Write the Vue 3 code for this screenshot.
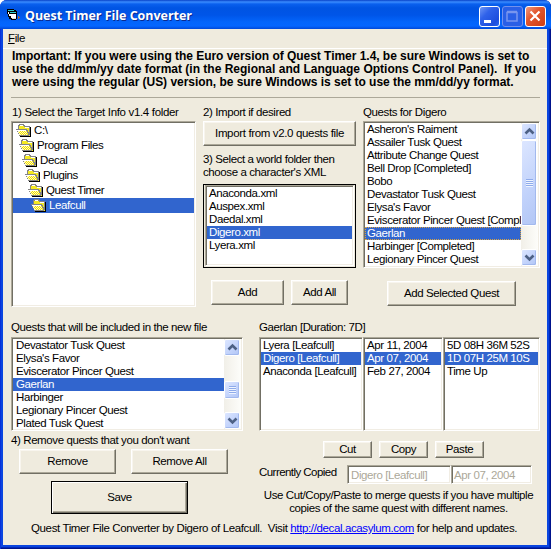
<script setup>
const folders = ['C:\\', 'Program Files', 'Decal', 'Plugins', 'Quest Timer', 'Leafcull']
const characters = ['Anaconda.xml', 'Auspex.xml', 'Daedal.xml', 'Digero.xml', 'Lyera.xml']
const quests = [
  "Asheron's Raiment", 'Assailer Tusk Quest', 'Attribute Change Quest', 'Bell Drop [Completed]',
  'Bobo', 'Devastator Tusk Quest', "Elysa's Favor", 'Eviscerator Pincer Quest [Completed]',
  'Gaerlan', 'Harbinger [Completed]', 'Legionary Pincer Quest',
]
const included = [
  'Devastator Tusk Quest', "Elysa's Favor", 'Eviscerator Pincer Quest', 'Gaerlan',
  'Harbinger', 'Legionary Pincer Quest', 'Plated Tusk Quest',
]
const timers = [
  ['Lyera [Leafcull]', 'Digero [Leafcull]', 'Anaconda [Leafcull]'],
  ['Apr 11, 2004', 'Apr 07, 2004', 'Feb 27, 2004'],
  ['5D 08H 36M 52S', '1D 07H 25M 10S', 'Time Up'],
]
</script>

<template>
  <div class="window">
    <header class="titlebar">
      <svg class="app-icon" width="14" height="14" viewBox="0 0 14 14" shape-rendering="crispEdges">
        <path d="M0 1h7v1h2v1h1v8h-1v1H4v-1H2V9H1V6H0z" fill="#000" />
        <path d="M1 2h6v1H1zM3 4h6v1H3z" fill="#2fd0d0" />
        <path d="M1 4h1v2H1zM2 6h1v2H2zM3 6h6v4H4V8H3z" fill="#fff" />
        <path d="M5 10h4v1H5z" fill="#ddd" />
        <path d="M11 8h1v1h1v1h-1v1h-1z" fill="#a8683c" />
      </svg>
      <h1>Quest Timer File Converter</h1>
      <div class="captions">
        <span class="cap"><svg width="21" height="21"><path d="M5 14h7v3H5z" fill="#fff" /></svg></span>
        <span class="cap off"><svg width="21" height="21"><path d="M5 6.5h10v8.500H5zM5 5.500h10" fill="none" stroke="#7895ee" stroke-width="1.500" /></svg></span>
        <span class="cap close"><svg width="21" height="21"><path d="M5.500 5.500l9 9M14.500 5.500l-9 9" stroke="#fff" stroke-width="2.200" /></svg></span>
      </div>
    </header>
    <nav class="menu"><span><u>F</u>ile</span></nav>
    <main>
      <div class="notice">
        <p class="n1">Important: If you were using the Euro version of Quest Timer 1.4, be sure Windows is set to</p>
        <p>use the dd/mm/yy date format (in the Regional and Language Options Control Panel).&nbsp; If you</p>
        <p class="n3">were using the regular (US) version, be sure Windows is set to use the mm/dd/yy format.</p>
      </div>

      <div class="upper">
        <section>
          <label class="step1">1) Select the Target Info v1.4 folder</label>
          <ul class="list tree">
            <li v-for="(f, i) in folders" :key="f" :class="['level-' + i, { sel: i === 5 }]">
              <svg width="16" height="13" viewBox="0 0 16 13" shape-rendering="crispEdges">
                <path d="M4 3h11v10H4z" fill="#000" />
                <path d="M3 1h1V0h4v1h1v1h5v10H3z" fill="#f5ea20" />
                <path d="M2.500 6V1.500h1v-1h4v1h1v1h5V11M0 5.500h10.500v1h1v2h1v3H3v-2H2v-2H1V6" fill="none" stroke="#858585" />
                <path d="M1 6h9v2h1v3H3V9H2V7H1z" fill="#fffbc0" />
                <path d="M1 6h9v1H1zM4 1h3v1H4zM9 3h4v1H9z" fill="#fff" />
                <path d="M3 8h1v1H3zM5 8h1v1H5zM7 8h1v1H7zM9 8h1v1H9zM4 9h1v1H4zM6 9h1v1H6zM8 9h1v1H8zM10 9h1v1h-1zM5 10h1v1H5zM7 10h1v1H7zM9 10h1v1H9zM4 7h1v1H4zM6 7h1v1H6zM8 7h1v1H8z" fill="#f2df00" />
              </svg>
              <span>{{ f }}</span>
            </li>
          </ul>
        </section>

        <section>
          <label>2) Import if desired</label>
          <button class="import">Import from v2.0 quests file</button>
          <label class="two">3) Select a world folder then<br />choose a character's XML</label>
          <div class="focus-frame">
            <ul class="list chars">
              <li v-for="(c, i) in characters" :key="c" :class="{ sel: i === 3 }">{{ c }}</li>
            </ul>
          </div>
          <div class="add-row">
            <button class="add">Add</button>
            <button class="add-all">Add All</button>
          </div>
        </section>

        <section>
          <label>Quests for Digero</label>
          <div class="list scroll quests">
            <ul>
              <li v-for="(q, i) in quests" :key="q" :class="{ sel: i === 8, dotted: i === 8 }">{{ q }}</li>
            </ul>
            <div class="bar">
              <span class="sb"><svg width="17" height="17"><path d="M4.500 10.500l4-4 4 4" /></svg></span>
              <span class="sb thumb tall"><i></i></span>
              <span class="sb end"><svg width="17" height="17"><path d="M4.500 6.500l4 4 4-4" /></svg></span>
            </div>
          </div>
          <button class="add-sel">Add Selected Quest</button>
        </section>
      </div>

      <div class="lower">
        <section>
          <label>Quests that will be included in the new file</label>
          <div class="list scroll included">
            <ul>
              <li v-for="(q, i) in included" :key="q" :class="{ sel: i === 3 }">{{ q }}</li>
            </ul>
            <div class="bar">
              <span class="sb"><svg width="17" height="17"><path d="M4.500 10.500l4-4 4 4" /></svg></span>
              <span class="sb thumb short"><i></i></span>
              <span class="sb end"><svg width="17" height="17"><path d="M4.500 6.500l4 4 4-4" /></svg></span>
            </div>
          </div>
          <label class="step4">4) Remove quests that you don't want</label>
          <div class="remove-row">
            <button>Remove</button>
            <button>Remove All</button>
          </div>
          <button class="save"><span>Save</span></button>
        </section>

        <section>
          <label>Gaerlan [Duration: 7D]</label>
          <div class="timers">
            <ul v-for="(col, c) in timers" :key="c" class="list">
              <li v-for="(t, i) in col" :key="t" :class="{ sel: i === 1 }">{{ t }}</li>
            </ul>
          </div>
          <div class="edit-row">
            <button>Cut</button>
            <button>Copy</button>
            <button>Paste</button>
          </div>
          <div class="copied">
            <label>Currently Copied</label>
            <span class="field wide">Digero [Leafcull]</span>
            <span class="field">Apr 07, 2004</span>
          </div>
          <p class="hint"><span>Use Cut/Copy/Paste to merge quests if you have multiple</span><br /><span>copies of the same quest with different names.</span></p>
        </section>
      </div>
      <footer>Quest Timer File Converter by Digero of Leafcull.&nbsp; Visit <a>http://decal.acasylum.com</a> for help and updates.</footer>
    </main>
  </div>
</template>

<style>
body { background: #fff; }
</style>

<style scoped>
* { box-sizing: border-box; margin: 0; padding: 0; }
.window {
  width: 551px; height: 549px; overflow: hidden;
  display: flex; flex-direction: column;
  padding: 0 4px 4px 3px;
  border-radius: 7px 7px 0 0;
  background: #0a45e0;
  box-shadow: inset 1px 0 #0831d9, inset -1px -1px #00138c, inset -2px -2px #0028b8;
  font: 11.5px/13px "Liberation Sans", Arial, sans-serif;
  letter-spacing: -0.4px; color: #000; white-space: nowrap;
}
.titlebar {
  flex: none; height: 29px; margin: 0 -4px 0 -3px; padding: 1px 5px 0 7px;
  display: flex; align-items: center;
  background: linear-gradient(#0842c8 0, #3a8cff 2px, #0a60ee 4px, #0054e3 8px, #0055e8 15px, #0365fb 22px, #0466ff 26px, #0048d8 29px);
}
.app-icon { flex: none; margin-right: 4px; }
h1 {
  flex: 1; font: bold 12.5px/18px "Open Sans", sans-serif; letter-spacing: -0.03px;
  color: #fff; text-shadow: 1px 1px #0a2a90; padding-top: 2px;
}
.captions { display: flex; gap: 2px; padding-top: 2px; }
.cap {
  width: 21px; height: 21px; border: 1px solid #fff; border-radius: 3px; display: flex;
  background: linear-gradient(135deg, #6f96f4, #2f62ea 35%, #1c4ddd 80%, #2a68f0);
}
.cap svg { flex: none; margin: -1px; }
.cap.off { border-color: #7391ec; background: #2a5fe6; }
.cap.close { background: linear-gradient(135deg, #f09a80, #e2572f 40%, #cf3d12); }
.menu { flex: none; height: 20px; padding: 3px 5px; background: #efebde; border-bottom: 1px solid #fff; }
main { flex: 1; background: #efebde; padding: 1px 7px 0 8px; }
.notice { height: 48px; border-bottom: 1px solid #aca899; font-weight: bold; font-size: 12px; padding-left: 1px; letter-spacing: 0; }
.n1, .n3 { letter-spacing: -0.035px; }
ul { list-style: none; }
label { display: block; height: 13px; }
section { min-width: 0; }

.upper { display: grid; grid-template-columns: 185px 153px 177px; column-gap: 7px; padding-top: 8px; height: 223px; }
.step1 { padding-left: 1px; letter-spacing: -0.33px; }
.list {
  background: #fff; border: 1px solid; border-color: #aca899 #fff #fff #aca899;
  box-shadow: inset 1px 1px #716f64, inset -1px -1px #f1ede4;
  padding: 1px; overflow: hidden;
}
.upper .list { margin-top: 2px; }
li { height: 13px; padding-left: 2px; overflow: hidden; }
li.sel { background: #3165ce; color: #fff; }
.tree { height: 186px; }
.tree li { height: 15px; display: flex; align-items: center; gap: 2px; }
.tree svg { flex: none; }
.tree .level-0 { padding-left: 3px; }
.tree .level-1 { padding-left: 6px; }
.tree .level-2 { padding-left: 9px; }
.tree .level-3 { padding-left: 12px; }
.tree .level-4 { padding-left: 15px; }
.tree .level-5 { padding-left: 18px; }

button {
  display: block; height: 25px; border: 1px solid; border-color: #fff #716f64 #716f64 #fff;
  box-shadow: inset -1px -1px #aca899, inset 1px 1px #f8f5ee;
  background: #efebde; color: inherit; font: inherit; letter-spacing: inherit; text-align: center;
}
.import { width: 153px; margin-top: 2px; letter-spacing: -0.35px; }
.two { height: 26px; margin-top: 7px; }
.focus-frame { width: 153px; height: 84px; border: 1px solid #000; margin-top: 5px; padding: 0 1px 1px; }
.upper .chars { margin: 0; height: 81px; }
.add-row { display: flex; gap: 7px; padding: 12px 0 0 8px; }
.add { width: 73px; }
.add-all { width: 57px; }
.scroll { display: flex; }
.scroll ul { flex: 1; min-width: 0; overflow: hidden; }
.quests { height: 147px; }
.dotted { outline: 1px dotted #d9a441; outline-offset: -1px; }
.add-sel { width: 129px; margin: 13px 0 0 24px; }

.bar { flex: none; width: 17px; display: flex; flex-direction: column; background: linear-gradient(90deg, #f1efe8, #fdfdfa); }
.sb {
  flex: none; height: 17px; width: 16px; border: 1px solid #fff; border-radius: 2px;
  background: linear-gradient(135deg, #dce6ff, #c1d2fb 60%, #b2c6f5); box-shadow: inset -1px -1px #a2b9ee; display: flex;
}
.sb svg { flex: none; margin: -1px; }
.sb path { fill: none; stroke: #4d6185; stroke-width: 2.6; }
.sb.end { margin-top: auto; }
.thumb { align-items: center; justify-content: center; }
.thumb i { width: 7px; height: 8px; background: repeating-linear-gradient(#8fabeb 0 1px, #eef4ff 1px 2px); }
.tall { height: 86px; }
.short { height: 18px; margin-top: 25px; }

.lower { display: grid; grid-template-columns: 232px 281px; column-gap: 16px; height: 201px; }
.lower .list { margin-top: 3px; height: 94px; }
.included li { padding-left: 3px; }
.step4 { margin-top: 3px; }
.remove-row { display: flex; gap: 15px; padding: 2px 0 0 8px; }
.remove-row button { width: 97px; }
.save { width: 137px; height: 33px; margin: 7px 0 0 40px; border-color: #000; box-shadow: inset 1px 1px #fff, inset -1px -1px #716f64, inset -2px -2px #aca899; }
.timers { display: grid; grid-template-columns: 104px 80px 97px; }
.edit-row { display: flex; gap: 7px; padding: 10px 0 0 64px; }
.edit-row button { width: 49px; height: 17px; line-height: 13px; }
.copied { display: flex; margin-top: 7px; }
.copied label { width: 88px; padding-top: 1px; letter-spacing: -0.55px; }
.field {
  width: 81px; height: 19px; padding: 3px 2px; background: #fff; color: #aca899;
  border: 1px solid; border-color: #aca899 #fff #fff #aca899;
  box-shadow: inset 1px 1px #716f64, inset -1px -1px #f1ede4;
}
.field.wide { width: 104px; padding-left: 3px; }
.hint { text-align: center; margin-top: 5px; padding-right: 2px; }
footer { padding: 0 0 0 20px; letter-spacing: -0.37px; }
footer a { color: #00f; text-decoration: underline; }
</style>
